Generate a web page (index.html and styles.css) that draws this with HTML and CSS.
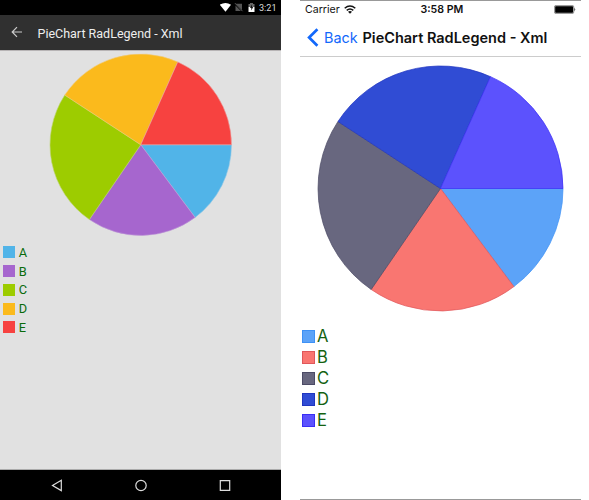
FILE: index.html
```html
<!DOCTYPE html>
<html lang="en">
<head>
<meta charset="utf-8">
<title>PieChart RadLegend - Xml</title>
<link rel="stylesheet" href="styles.css">
</head>
<body>
<main class="devices">
  <section class="phone android">
    <div class="status">
      <svg class="status-icons" width="38" height="15" viewBox="0 0 38 15">
        <path d="M-.2 4.7Q5.5 1.2 11 4.7L5.5 11.8Z" fill="#fff"/>
        <path d="M16 3.8H22V10Z M15.5 5.5V11H21Z" fill="#555"/>
        <path d="M15 3.2L22.5 11.2" stroke="#777" stroke-width=".8"/>
        <path d="M28.5 4H30V3H33V4H34.5V7H28.5Z" fill="#666"/>
        <path d="M28.5 7H34.5V12H28.5Z" fill="#fff"/>
        <path d="M32 4.5L30 8H31.3V10.5L33.2 7H32Z" fill="#111"/>
      </svg>
      <span class="time">3:21</span>
    </div>
    <header class="bar">
      <svg width="12" height="12" viewBox="0 0 12 12" fill="none" stroke="#ccc" stroke-width="1.2"><path d="M11 6H1.5M6 1.2L1.2 6L6 10.8"/></svg>
      <h1>PieChart RadLegend - Xml</h1>
    </header>
    <div class="content">
      <svg class="pie" viewBox="-100 -100 200 200">
        <path class="a" d="M0 0L100 0A100 100 0 0 1 59.9 80.1Z"/>
        <path class="b" d="M0 0L59.9 80.1A100 100 0 0 1 -56.6 82.4Z"/>
        <path class="c" d="M0 0L-56.6 82.4A100 100 0 0 1 -83.7 -54.7Z"/>
        <path class="d" d="M0 0L-83.7 -54.7A100 100 0 0 1 40.8 -91.3Z"/>
        <path class="e" d="M0 0L40.8 -91.3A100 100 0 0 1 100 0Z"/>
      </svg>
      <ul class="legend">
        <li><i class="a"></i>A</li>
        <li><i class="b"></i>B</li>
        <li><i class="c"></i>C</li>
        <li><i class="d"></i>D</li>
        <li><i class="e"></i>E</li>
      </ul>
    </div>
    <nav class="keys">
      <svg width="12" height="13" viewBox="0 0 12 13"><path d="M10.3 1.2V11.6L1.5 6.4Z"/></svg>
      <svg width="12" height="13" viewBox="0 0 12 13"><circle cx="6" cy="6.5" r="5.2"/></svg>
      <svg width="12" height="13" viewBox="0 0 12 13"><path d="M1.3 1.7H10.7V11.3H1.3Z"/></svg>
    </nav>
  </section>
  <section class="phone ios">
    <div class="status">
      <span class="carrier">Carrier
        <svg width="12" height="9" viewBox="0 0 12 9" fill="none" stroke="#111" stroke-width="1.5"><path d="M.7 3.2Q6-1.3 11.3 3.2M2.7 5.3Q6 2.6 9.3 5.3"/><path d="M4 6.8Q6 5.4 8 6.8L6 8.8Z" fill="#111" stroke="none"/></svg>
      </span>
      <span class="time">3:58 PM</span>
      <svg class="battery" width="22" height="9" viewBox="0 0 22 9"><rect x=".4" y=".4" width="19.4" height="8.2" rx="1.6" fill="#bbb" stroke="#777" stroke-width=".7"/><rect x="1.2" y="1.2" width="17.8" height="6.6" rx=".7"/><path d="M20.5 2.8Q22 4.5 20.5 6.2Z"/></svg>
    </div>
    <header class="bar">
      <svg width="12" height="19" viewBox="0 0 12 19" fill="none" stroke="#1268fb" stroke-width="2.7"><path d="M10.4 1.2L2.1 9.5L10.4 17.8"/></svg>
      <span class="back">Back</span>
      <h1>PieChart RadLegend - Xml</h1>
    </header>
    <div class="content">
      <svg class="pie" viewBox="-100 -100 200 200">
        <path class="a" d="M0 0L100 0A100 100 0 0 1 59.9 80.1Z"/>
        <path class="b" d="M0 0L59.9 80.1A100 100 0 0 1 -56.6 82.4Z"/>
        <path class="c" d="M0 0L-56.6 82.4A100 100 0 0 1 -83.7 -54.7Z"/>
        <path class="d" d="M0 0L-83.7 -54.7A100 100 0 0 1 40.8 -91.3Z"/>
        <path class="e" d="M0 0L40.8 -91.3A100 100 0 0 1 100 0Z"/>
      </svg>
      <ul class="legend">
        <li><i class="a"></i>A</li>
        <li><i class="b"></i>B</li>
        <li><i class="c"></i>C</li>
        <li><i class="d"></i>D</li>
        <li><i class="e"></i>E</li>
      </ul>
    </div>
  </section>
</main>
</body>
</html>
```
FILE: styles.css
```css
* { box-sizing: border-box; }
body { margin: 0; background: #fff; }
h1, ul { margin: 0; padding: 0; }
ul { list-style: none; }
svg { display: block; flex: none; }
.devices { display: flex; gap: 19px; height: 500px; }
.phone { display: flex; flex-direction: column; width: 281px; height: 500px; white-space: nowrap; }
.status, .bar, .legend li { display: flex; align-items: center; }
.pie { overflow: visible; }
.pie path { vector-effect: non-scaling-stroke; stroke-linejoin: round; }

.a { --fill: #51b4e8; --line: #92c9e8; }
.b { --fill: #a666ce; --line: #c09bd7; }
.c { --fill: #9dcc00; --line: #bbd36c; }
.d { --fill: #fbba1c; --line: #f0ca75; }
.e { --fill: #f74240; --line: #eda09d; }
.ios .a { --fill: #5ca3f8; --line: #3e91f5; }
.ios .b { --fill: #f97671; --line: #e0575a; }
.ios .c { --fill: #68677f; --line: #4c4b66; }
.ios .d { --fill: #304cd4; --line: #2035c0; }
.ios .e { --fill: #5c52fd; --line: #3a2ef5; }
.pie path { fill: var(--fill); stroke: var(--line); stroke-width: .6px; }
.ios .pie path { stroke-width: .9px; stroke-opacity: .8; }
.legend i { background: var(--fill); }

.android { font-family: Roboto, sans-serif; background: #e1e1e1; }
.android .status { height: 15px; background: #000; padding-left: 220px; }
.android .time { color: #ddd; font-size: 9.1px; line-height: 15px; margin: 1px 0 0 1px; }
.android .bar { height: 35px; background: #303030; padding-left: 11px; gap: 14.5px; }
.android .bar svg { margin-top: -1px; }
.android h1 { color: #eee; font-size: 12.5px; font-weight: 400; margin-top: 1px; }
.android .content { flex: 1; border-top: 1px solid #b7b4b5; border-bottom: 1px solid #aaa; padding-top: 2.6px; }
.android .pie { width: 181.5px; height: 181.5px; margin: 0 auto; }
.android .legend { padding: 7.8px 0 0 3.2px; }
.android .legend li { height: 18.75px; gap: 3.5px; color: #096b0b; font-size: 12.8px; }
.android .legend i { width: 12px; height: 12px; }
.keys { height: 30px; background: #000; display: flex; gap: 72px; align-items: center; justify-content: center; }
.keys svg { fill: none; stroke: #ddd; stroke-width: 1.2; }

.ios { font-family: Inter, sans-serif; background: #fff; color: #111; border-top: 1px solid #999; border-bottom: 1px solid #999; }
.ios .status { height: 17px; padding: 0 5px; font-size: 10.6px; }
.carrier { display: flex; align-items: center; gap: 4px; width: 115.5px; }
.ios .time { font-weight: 600; }
.battery { margin-left: auto; }
.ios .bar { height: 39px; border-bottom: 1px solid #ccc; padding: 1px 0 0 7px; }
.back { color: #1268fb; font-size: 14.4px; margin-left: 5px; width: 38.5px; }
.ios h1 { font-size: 14.5px; font-weight: 600; }
.ios .content { padding-top: 9px; flex: 1; }
.ios .pie { width: 245px; height: 245px; margin: 0 auto; }
.ios .legend { padding: 14.5px 0 0 2px; }
.ios .legend li { height: 21px; gap: 2px; color: #146210; font-size: 16.6px; line-height: 19px; }
.ios .legend i { width: 13px; height: 13px; border: 1px solid var(--line); }
```
